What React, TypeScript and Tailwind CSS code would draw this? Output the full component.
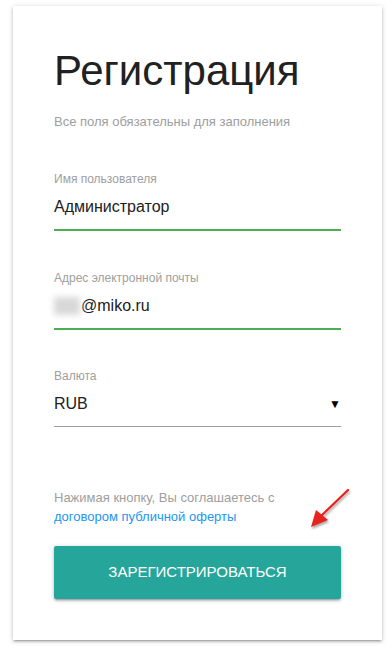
export default function App() {
  return (
    <div className="min-h-[653px] bg-white pt-[6px] font-['Liberation_Sans',Arial,sans-serif]">
      <RegisterCard />
    </div>
  )
}

function RegisterCard() {
  return (
    <div className="relative ml-[13px] w-[369px] bg-white px-[41px] pt-[41px] pb-[41px] shadow-[0_2px_2px_0_rgba(0,0,0,0.14),0_3px_1px_-2px_rgba(0,0,0,0.12),0_1px_5px_0_rgba(0,0,0,0.2)]">
      <h1 className="text-[42px] leading-[48px] text-[#212121]">Регистрация</h1>
      <p className="mt-[19px] text-[13px] leading-[16px] text-[#9e9e9e]">
        Все поля обязательны для заполнения
      </p>

      <Field label="Имя пользователя" className="mt-[42px]">
        <span>Администратор</span>
      </Field>

      <Field label="Адрес электронной почты" className="mt-[40px]">
        <span className="mr-px inline-block h-[18px] w-[26px] bg-[#d8d8d8] blur-[3px]" />
        <span>@miko.ru</span>
      </Field>

      <div className="mt-[39px]">
        <div className="text-[12px] leading-[14px] text-[#9e9e9e]">Валюта</div>
        <div className="mt-[9px] flex items-center justify-between border-b border-[#9e9e9e] pb-[10px] text-[16px] leading-[24px] text-[#212121]">
          <span>RUB</span>
          <span className="text-[12px] text-black">▼</span>
        </div>
      </div>

      <p className="mt-[61px] text-[13px] leading-[19px] text-[#9e9e9e]">
        Нажимая кнопку, Вы соглашаетесь с
        <br />
        <a className="text-[#2196f3]">договором публичной оферты</a>
      </p>

      <button className="mt-[20px] flex h-[53px] w-full items-center justify-center rounded-[2px] bg-[#26a69a] text-[15px] uppercase text-white shadow-[0_2px_2px_0_rgba(0,0,0,0.14),0_3px_1px_-2px_rgba(0,0,0,0.12),0_1px_5px_0_rgba(0,0,0,0.2)]">
        Зарегистрироваться
      </button>

      <svg
        className="absolute left-[290px] top-[474px]"
        width="60"
        height="60"
        viewBox="0 0 60 60"
      >
        <defs>
          <filter id="sh" x="-20%" y="-20%" width="150%" height="150%">
            <feDropShadow dx="1" dy="2" stdDeviation="1.2" floodColor="#000" floodOpacity="0.35" />
          </filter>
        </defs>
        <g filter="url(#sh)">
          <line x1="45" y1="10" x2="17" y2="37" stroke="#e8201a" strokeWidth="2.2" strokeLinecap="round" />
          <polygon points="8,47 13,30 25,40" fill="#e8201a" />
        </g>
      </svg>
    </div>
  )
}

function Field({
  label,
  className,
  children,
}: {
  label: string
  className?: string
  children: React.ReactNode
}) {
  return (
    <div className={className}>
      <div className="text-[12px] leading-[14px] text-[#9e9e9e]">{label}</div>
      <div className="mt-[9px] flex items-center border-b-2 border-[#4caf50] pb-[10px] text-[16px] leading-[24px] text-[#212121]">
        {children}
      </div>
    </div>
  )
}
